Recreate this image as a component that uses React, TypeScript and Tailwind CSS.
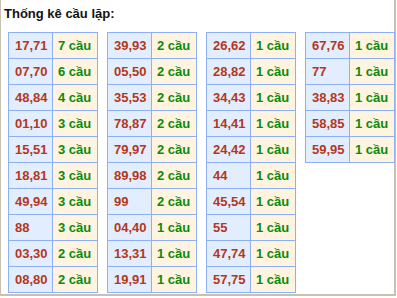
const columns: [string, string][][] = [
  [
    ["17,71", "7 cầu"],
    ["07,70", "6 cầu"],
    ["48,84", "4 cầu"],
    ["01,10", "3 cầu"],
    ["15,51", "3 cầu"],
    ["18,81", "3 cầu"],
    ["49,94", "3 cầu"],
    ["88", "3 cầu"],
    ["03,30", "2 cầu"],
    ["08,80", "2 cầu"],
  ],
  [
    ["39,93", "2 cầu"],
    ["05,50", "2 cầu"],
    ["35,53", "2 cầu"],
    ["78,87", "2 cầu"],
    ["79,97", "2 cầu"],
    ["89,98", "2 cầu"],
    ["99", "2 cầu"],
    ["04,40", "1 cầu"],
    ["13,31", "1 cầu"],
    ["19,91", "1 cầu"],
  ],
  [
    ["26,62", "1 cầu"],
    ["28,82", "1 cầu"],
    ["34,43", "1 cầu"],
    ["14,41", "1 cầu"],
    ["24,42", "1 cầu"],
    ["44", "1 cầu"],
    ["45,54", "1 cầu"],
    ["55", "1 cầu"],
    ["47,74", "1 cầu"],
    ["57,75", "1 cầu"],
  ],
  [
    ["67,76", "1 cầu"],
    ["77", "1 cầu"],
    ["38,83", "1 cầu"],
    ["58,85", "1 cầu"],
    ["59,95", "1 cầu"],
  ],
];

export default function App() {
  return (
    <div
      className="w-[396px] h-[296px] bg-white border-l border-r-2 border-b-2 border-[#c8c0b2] text-[13px] font-bold"
      style={{ fontFamily: '"Liberation Sans", Arial, sans-serif' }}
    >
      <div className="pt-[6px] pl-[3px] leading-[16px] text-[#111]">Thống kê cầu lặp:</div>
      <div className="flex items-start gap-[9px] mt-[10px] pl-[7px]">
        {columns.map((rows, i) => (
          <div key={i} className="grid grid-cols-[44px_45px] border-l border-t border-[#8db0f3]">
            {rows.map(([num, count]) => (
              <div key={num} className="contents">
                <div className="h-[26px] flex items-center pl-[6px] bg-[#e2eefd] text-[#b3371d] border-r border-b border-[#8db0f3]">
                  {num}
                </div>
                <div className="h-[26px] flex items-center pl-[5px] bg-[#fff4df] text-[#0b8a0b] border-r border-b border-[#8db0f3]">
                  {count}
                </div>
              </div>
            ))}
          </div>
        ))}
      </div>
    </div>
  );
}
